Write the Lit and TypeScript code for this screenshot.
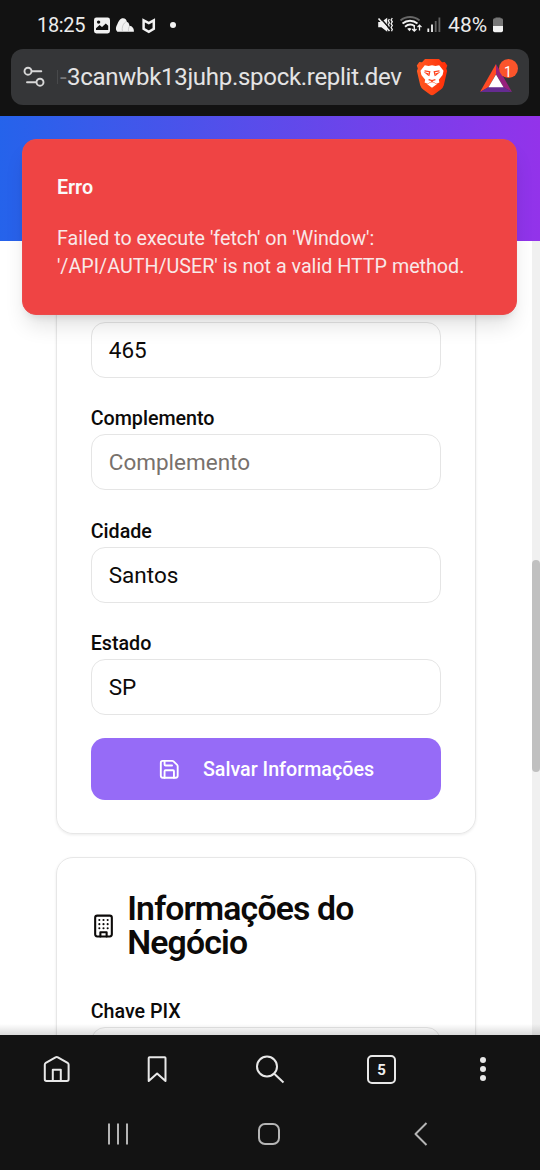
import { LitElement, html, css, svg } from "lit";
import { customElement, property } from "lit/decorators.js";

@customElement("status-bar")
class StatusBar extends LitElement {
  static styles = css`
    :host { display: flex; height: 49px; box-sizing: border-box; padding: 1px 36px 0 37px; align-items: center; color: #ececec; font-size: 20px; }
    svg { display: block; flex: none; }
    .clock { width: 56px; letter-spacing: -0.35px; }
    .left { flex: 1; }
    .pct { margin-left: 7px; width: 44px; font-size: 21px; letter-spacing: 0.1px; white-space: nowrap; }
  `;
  render() {
    return html`
      <span class="clock">18:25</span>
      <div class="left">
        <svg width="90" height="20" viewBox="93 14.500 90 20">
          <rect x="94" y="17" width="16" height="16" rx="2.400" fill="#f2f2f2" />
          <circle cx="98.600" cy="21.600" r="1.700" fill="#121212" />
          <path d="M96 29.500v-1.700l3.600-3.200 2.400 2 3.800-3.700 2.400 2.400v4.200z" fill="#121212" />
          <path d="M117.500 31.300c-2.200-1.600-1.800-5-.3-7.300 1.500-3.500 3-6.200 5.800-6.200 2.300 0 3.600 1.600 3.900 3.700z" fill="#f2f2f2" />
          <path d="M117.500 31.300c-.3-5 4-10.500 8-10.300 2.600.2 3.900 2 3.900 4.300 3 .3 4.800 2.800 4.500 6z" fill="#f2f2f2" />
          <path d="M122.500 31c-1-4 .8-8.800 4-9.800M128.500 31c-.3-2.500.2-4.500 1.200-5.500" fill="none" stroke="#bbb" stroke-width=".7" />
          <path d="M143.600 19.800l5.200 2.800 5-2.800v8.600l-5 3-5.200-3z" fill="none" stroke="#f2f2f2" stroke-width="2.500" />
          <circle cx="173" cy="24.500" r="3" fill="#f2f2f2" />
        </svg>
      </div>
      <svg width="64" height="20" viewBox="377 15 64 20">
        <path d="M378.200 22h3.200l5.800-4.300v14l-5.800-4.500h-3.200z" fill="#f2f2f2" />
        <path d="M379.500 17l11.500 13" stroke="#121212" stroke-width="1.500" />
        <path d="M378.500 18.500l11 12.500" stroke="#f2f2f2" stroke-width="1.600" />
        <path d="M389.400 19l-1 1.800 1 1.900-1 1.900 1 1.900M392.300 18l-1.200 1.900 1.200 1.900-1.200 1.900 1.200 1.900-1.200 1.900 1.200 1.900-.8 1.900" fill="none" stroke="#f2f2f2" stroke-width="1.300" />
        <path d="M400.500 20.500c5.500-4.700 13.500-4.700 19 0" fill="none" stroke="#666" stroke-width="1.900" />
        <path d="M402.500 23.500c4.500-3.700 10.500-3.700 15 0M405 26.700c3-2.500 7-2.500 9.800-.5" fill="none" stroke="#f2f2f2" stroke-width="1.900" />
        <path d="M407.200 28.800c1.400-1.200 3-1.200 4.300 0l-2 2.500z" fill="#f2f2f2" />
        <path d="M414.300 25.500v5.500m-2.200-2 2.200 2.200 2.200-2.200M419.500 30.500v-5.300m-2 1.900 2-2 2 2" fill="none" stroke="#f2f2f2" stroke-width="1.300" />
        <path d="M428.300 28.500V32M432 24.500V32" stroke="#f2f2f2" stroke-width="1.800" />
        <path d="M435.700 21v11M439.400 17.500V32" stroke="#606060" stroke-width="1.800" />
      </svg>
      <span class="pct">48%</span>
      <svg width="12" height="18" viewBox="492 15.500 12 18">
        <path d="M493 26v-6.500q0-1.700 1.500-1.700h1V17h5v.8h1q1.500 0 1.500 1.700V26z" fill="#777" />
        <path d="M493 25.500h10V30q0 1.700-1.700 1.700h-6.600q-1.700 0-1.700-1.700z" fill="#f2f2f2" />
      </svg>
    `;
  }
}

@customElement("address-bar")
class AddressBar extends LitElement {
  static styles = css`
    :host { display: flex; align-items: center; height: 56px; margin: 0 11px; box-sizing: border-box; padding: 0 13px 0 11px; border-radius: 12px; background: #353638; color: #e4e4e4; }
    svg { display: block; flex: none; }
    .url { width: 350px; margin-left: 11px; flex: none; display: flex; align-items: center; font-size: 24px; letter-spacing: -0.290px; white-space: nowrap; }
    .mark { width: 1px; height: 14px; margin-right: 2px; background: #48494b; }
    .fade { color: #77787a; width: 7px; flex: none; }
    .shield { margin-left: 9px; }
    .bat { position: relative; margin-left: 31px; }
    .badge { position: absolute; left: 19.500px; top: 0; width: 19px; height: 19px; border-radius: 50%; background: #fb542b; color: #fff; font-size: 14px; line-height: 27px; text-align: center; }
  `;
  render() {
    return html`
      <svg width="24" height="24" viewBox="22 65 24 24" fill="none" stroke="#d8d8d8" stroke-width="1.900" stroke-linecap="round">
        <circle cx="28" cy="71.200" r="3.500" /><path d="M32 71.200h9.300M27 82.200h8.500" /><circle cx="40" cy="82.200" r="3.500" />
      </svg>
      <div class="url"><i class="mark"></i><span class="fade">-</span><span>3canwbk13juhp.spock.replit.dev</span></div>
      <svg class="shield" width="32" height="38" viewBox="416 58 32 38">
        <defs><linearGradient id="lion"><stop offset="0" stop-color="#ff5a22" /><stop offset="1" stop-color="#ff2d08" /></linearGradient></defs>
        <path d="M425 59h14l3 3.300 2.800-.2 2.500 3.500-1 3 .8 2.500-3.300 14.200q-.7 2.500-3 4.200l-6.800 5q-2 1.300-4 0l-6.800-5q-2.200-1.700-3-4.200L416.900 71l.9-2.400-1-3 2.500-3.500 2.700.2z" fill="url(#lion)" />
        <path d="M424.800 65.300l3.700.6 3.500-.6 3.500.6 3.700-.6 4.300 5.400-.9 4.200-3.800 4.800.6 2.800-3 1.300-4.400-2.900-4.400 2.900-3-1.300.6-2.800-3.800-4.800-.9-4.200z" fill="#fff" />
        <path d="M427.200 84.300l4.800-2.500 4.800 2.500-4.800 3.500z" fill="#fff" />
        <path d="M424.500 70.900l5.200.8-1 4.300M439.500 70.900l-5.200.8 1 4.300M428.600 79.600l3.400 1 3.400-1M432 80.500v2" fill="none" stroke="#ff421b" stroke-width="1.300" />
        <path d="M423.500 71.700l5.200 1.700-.8 2zM440.500 71.700l-5.200 1.700.8 2z" fill="#ff421b" />
      </svg>
      <div class="bat">
        <svg width="36" height="36" viewBox="479 58 36 36">
          <path d="M496 63L480 91l8.500-4.700L496 73z" fill="#ff4a25" />
          <path d="M496 63l16 28-8.500-4.700L496 73z" fill="#97217c" />
          <path d="M480 91h32l-8.500-5h-15z" fill="#652b91" />
          <path d="M496 73.500l7.500 12.700h-15z" fill="#fff" />
        </svg>
        <span class="badge">1</span>
      </div>
    `;
  }
}

@customElement("text-field")
class TextField extends LitElement {
  @property() label = "";
  @property() value = "";
  @property() placeholder = "";
  static styles = css`
    :host { display: block; }
    .label { height: 33.750px; box-sizing: border-box; padding-top: 2px; line-height: 33.750px; font-size: 19.690px; font-weight: 500; letter-spacing: -0.02px; color: #0c0a09; }
    .box { height: 56.250px; box-sizing: border-box; border: 1px solid #e5e5e5; border-radius: 14px; padding: 0 17px; font-size: 22.500px; line-height: 54.500px; color: #0c0a09; }
    .hint { color: #78716c; }
  `;
  render() {
    return html`
      ${this.label ? html`<div class="label">${this.label}</div>` : ""}
      <div class="box">${this.value || html`<span class="hint">${this.placeholder}</span>`}</div>
    `;
  }
}

const windows = [0, 1, 2].flatMap((r) => [0, 1, 2].map((c) => svg`<path d="M${8 + c * 4} ${6.2 + r * 4}h.01" />`));

@customElement("profile-page")
class ProfilePage extends LitElement {
  static styles = css`
    :host { display: flex; flex-direction: column; position: relative; height: 919px; overflow: hidden; background: #fff; }
    .hero { height: 125px; flex: none; background: linear-gradient(90deg, #2563eb, #9333ea); }
    .body { flex: 1; min-height: 0; display: flex; }
    .content { flex: 1; padding: 0 56px; overflow: hidden; }
    .track { width: 8px; background: #f0f0f0; padding-top: 319px; box-sizing: border-box; }
    .thumb { height: 212px; border-radius: 4px; background: #c0c0c0; }
    .card { box-sizing: border-box; border: 1px solid #e7e7e7; border-radius: 17px; padding: 33.750px; box-shadow: 0 1px 3px rgba(0, 0, 0, 0.08); }
    .first { height: 593px; border-top: 0; border-radius: 0 0 17px 17px; padding-top: 80.600px; display: flex; flex-direction: column; gap: 22.500px; }
    .second { height: 300px; margin-top: 23px; }
    .save { height: 62px; flex: none; border-radius: 14px; background: #966bf7; color: #fff; font-size: 19.690px; font-weight: 500; display: flex; align-items: center; justify-content: center; gap: 22.500px; }
    .save span { padding-top: 1px; }
    .heading { display: flex; align-items: center; gap: 11.500px; margin: 0 0 33.750px; font-size: 33.750px; line-height: 33.750px; font-weight: 600; letter-spacing: -0.84px; color: #0c0a09; }
    svg { display: block; flex: none; }
    .toast { position: absolute; left: 22.400px; top: 22.500px; width: 495px; height: 176.500px; box-sizing: border-box; border: 1px solid #ec4a4a; border-radius: 14px; padding: 34.200px 33.500px; background: #ef4444; color: #fafafa; box-shadow: 0 14px 21px -4px rgba(0, 0, 0, 0.12), 0 6px 8px -5px rgba(0, 0, 0, 0.12); font-size: 19.690px; line-height: 28.130px; }
    .title { font-weight: 600; }
    .message { margin-top: 23px; opacity: 0.9; white-space: nowrap; }
    .edge { position: absolute; left: 0; right: 0; bottom: 0; height: 11px; background: linear-gradient(transparent, rgba(0, 0, 0, 0.14)); }
  `;
  render() {
    return html`
      <div class="hero"></div>
      <div class="body">
        <div class="content">
          <section class="card first">
            <text-field value="465"></text-field>
            <text-field label="Complemento" placeholder="Complemento"></text-field>
            <text-field label="Cidade" value="Santos"></text-field>
            <text-field label="Estado" value="SP"></text-field>
            <div class="save">
              <svg width="22.500" height="22.500" viewBox="0 0 24 24" fill="none" stroke="#fff" stroke-width="2" stroke-linecap="round" stroke-linejoin="round">
                <path d="M15.200 3a2 2 0 0 1 1.400.6l3.800 3.800a2 2 0 0 1 .6 1.400V19a2 2 0 0 1-2 2H5a2 2 0 0 1-2-2V5a2 2 0 0 1 2-2z" />
                <path d="M17 21v-7a1 1 0 0 0-1-1H8a1 1 0 0 0-1 1v7M7 3v4a1 1 0 0 0 1 1h7" />
              </svg>
              <span>Salvar Informações</span>
            </div>
          </section>
          <section class="card second">
            <div class="heading">
              <svg width="25" height="28" viewBox="0 0 24 24" fill="none" stroke="#0c0a09" stroke-width="2" stroke-linecap="round" stroke-linejoin="round">
                <rect x="4" y="2" width="16" height="20" rx="2" /><path d="M9 22v-4h6v4" />${windows}
              </svg>
              <span>Informações do<br />Negócio</span>
            </div>
            <text-field label="Chave PIX"></text-field>
          </section>
        </div>
        <div class="track"><div class="thumb"></div></div>
      </div>
      <div class="toast">
        <div class="title">Erro</div>
        <div class="message">Failed to execute 'fetch' on 'Window':<br />'/API/AUTH/USER' is not a valid HTTP method.</div>
      </div>
      <div class="edge"></div>
    `;
  }
}

@customElement("bottom-bars")
class BottomBars extends LitElement {
  static styles = css`
    :host { display: block; height: 135px; background: #131313; }
    .row { display: flex; align-items: center; }
    .tools { height: 68px; padding-left: 41px; }
    .system { height: 62px; padding: 0 104px 0 103px; }
    svg { display: block; flex: none; fill: none; stroke: #e8e8e8; stroke-width: 2; stroke-linejoin: round; }
    .system svg { stroke: #b5b5b5; }
    .bookmark { margin-left: 68px; }
    .search { margin-left: 81px; }
    .tabs { margin-left: 81px; width: 29px; height: 29px; flex: none; box-sizing: border-box; border: 2px solid #e8e8e8; border-radius: 5px; color: #f0f0f0; font-size: 15px; line-height: 26px; font-weight: 700; text-align: center; }
    .dots { margin-left: 71px; display: grid; gap: 2.600px; width: 32px; justify-items: center; }
    .dot { width: 6px; height: 6px; border-radius: 50%; background: #e8e8e8; }
    .home { margin-left: 121px; }
    .back { margin-left: 122px; }
  `;
  render() {
    return html`
      <div class="row tools">
        <svg width="32" height="32" viewBox="41 1053 32 32"><path d="M44.800 1064.700q0-1.200 1-1.900l9.700-5.500q1.200-.7 2.400 0l9.700 5.500q1 .7 1 1.900v14.600q0 1.700-1.700 1.700H46.500q-1.700 0-1.700-1.700zM52.800 1081v-11.200h8V1081" /></svg>
        <svg class="bookmark" width="32" height="32" viewBox="141.500 1053 32 32"><path d="M149.200 1058q0-.8.800-.8h15.200q.8 0 .8.800v23l-8.400-7.500-8.400 7.500z" /></svg>
        <svg class="search" width="32" height="32" viewBox="254 1053 32 32"><circle cx="267" cy="1066.500" r="10" /><path d="M274 1073.500l9.500 9" /></svg>
        <div class="tabs">5</div>
        <div class="dots"><i class="dot"></i><i class="dot"></i><i class="dot"></i></div>
      </div>
      <div class="row system">
        <svg width="30" height="30" viewBox="103 1119.500 30 30"><path d="M109 1124v21M118 1124v21M127 1124v21" /></svg>
        <svg class="home" width="30" height="30" viewBox="254 1119.500 30 30"><rect x="259" y="1124.500" width="20" height="20" rx="6" /></svg>
        <svg class="back" width="30" height="30" viewBox="406 1119.500 30 30"><path d="M426.500 1123.500l-11 11 11 11" /></svg>
      </div>
    `;
  }
}

@customElement("app-root")
class AppRoot extends LitElement {
  static styles = css`
    :host { display: flex; flex-direction: column; width: 540px; height: 1170px; overflow: hidden; font-family: Roboto, sans-serif; background: #121212; }
    .chrome { height: 116px; flex: none; }
    profile-page, bottom-bars { flex: none; }
  `;
  render() {
    return html`
      <div class="chrome"><status-bar></status-bar><address-bar></address-bar></div>
      <profile-page></profile-page>
      <bottom-bars></bottom-bars>
    `;
  }
}
